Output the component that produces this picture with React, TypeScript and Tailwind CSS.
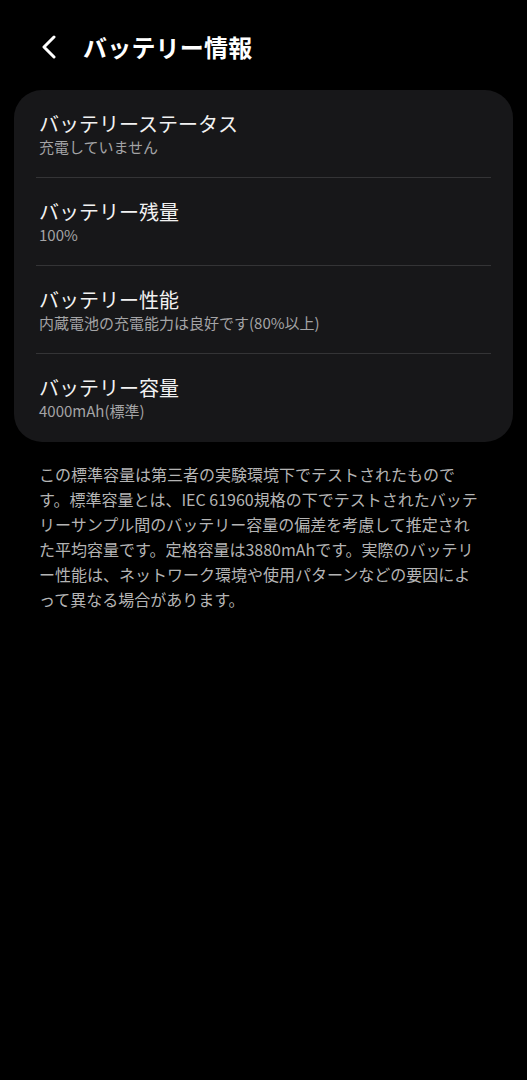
const font = {
  fontFamily: '"Noto Sans CJK JP", "Noto Sans", Roboto, sans-serif',
};

const rows = [
  { title: "バッテリーステータス", sub: "充電していません" },
  { title: "バッテリー残量", sub: "100%" },
  { title: "バッテリー性能", sub: "内蔵電池の充電能力は良好です(80%以上)" },
  { title: "バッテリー容量", sub: "4000mAh(標準)" },
];

export default function App() {
  return (
    <div className="min-h-[1080px] w-[527px] bg-black text-white" style={font}>
      {/* Header */}
      <div className="flex h-[90px] items-center pt-[4px]">
        <div className="flex w-[83px] justify-center pl-[15px]">
          <svg width="16" height="24" viewBox="0 0 16 24" fill="none" stroke="white" strokeWidth="3" strokeLinecap="round" strokeLinejoin="round">
            <path d="M13 2 3 12l10 10" />
          </svg>
        </div>
        <h1 className="text-[24px] font-bold leading-none tracking-[0.2px]">バッテリー情報</h1>
      </div>

      {/* Card */}
      <div className="mx-[14px] rounded-[28px] bg-[#171719] px-[22px]">
        {rows.map((r, i) => (
          <div
            key={r.title}
            className={`flex h-[88px] flex-col justify-center px-[3px] ${i < rows.length - 1 ? "border-b border-[#343436]" : ""}`}
          >
            <div className="text-[20px] leading-[26px] text-[#f2f2f2]">{r.title}</div>
            <div className="text-[15px] leading-[20px] text-[#a4a4a6]">{r.sub}</div>
          </div>
        ))}
      </div>

      {/* Note */}
      <p className="mt-[20px] w-[446px] pl-[39px] box-content text-[16px] leading-[25px] text-[#b4b4b4]">
        この標準容量は第三者の実験環境下でテストされたものです。標準容量とは、IEC 61960規格の下でテストされたバッテリーサンプル間のバッテリー容量の偏差を考慮して推定された平均容量です。定格容量は3880mAhです。実際のバッテリー性能は、ネットワーク環境や使用パターンなどの要因によって異なる場合があります。
      </p>
    </div>
  );
}
